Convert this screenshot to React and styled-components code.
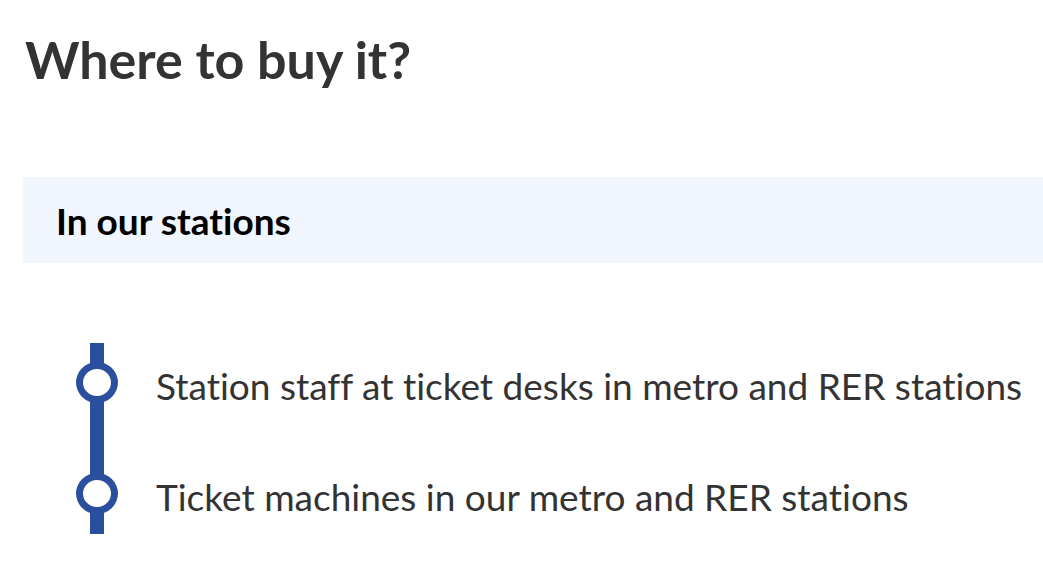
import React from "react";
import styled, { createGlobalStyle } from "styled-components";

const GlobalStyle = createGlobalStyle`
  body {
    margin: 0;
    background: #fff;
    font-family: Lato, "Open Sans", sans-serif;
    font-variant-ligatures: none;
  }
`;

const Page = styled.main`
  padding: 27px 0 0 23px;
`;

const Title = styled.h2`
  margin: 0 0 85px 2px;
  font-size: 52px;
  font-weight: 700;
  line-height: 65px;
  color: #333;
`;

const Panel = styled.section`
  background: #f0f5fe;
  padding: 23px 0 21px 33px;
`;

const PanelTitle = styled.h3`
  margin: 0;
  font-size: 37px;
  font-weight: 700;
  line-height: 42px;
  color: #000;
`;

const Stops = styled.ul`
  position: relative;
  list-style: none;
  margin: 80px 0 0 53px;
  padding: 19px 0 20px;
  display: flex;
  flex-direction: column;
  gap: 70px;

  /* the metro line behind the stops */
  &::before {
    content: "";
    position: absolute;
    top: 0;
    bottom: 0;
    left: 14px;
    width: 14px;
    background: #2b4f9f;
  }
`;

const Stop = styled.li`
  display: flex;
  align-items: flex-start;
  gap: 38px;
  height: 41px;
`;

const Dot = styled.span`
  position: relative;
  box-sizing: border-box;
  flex: none;
  width: 42px;
  height: 41px;
  border: 7px solid #2b4f9f;
  border-radius: 50%;
  background: #fff;
`;

const Label = styled.span`
  margin-top: 3px;
  font-size: 37px;
  line-height: 41px;
  color: #333;
  white-space: nowrap;
`;

const places = [
  "Station staff at ticket desks in metro and RER stations",
  "Ticket machines in our metro and RER stations",
];

export default function App() {
  return (
    <>
      <GlobalStyle />
      <Page>
        <Title>Where to buy it?</Title>
        <Panel>
          <PanelTitle>In our stations</PanelTitle>
        </Panel>
        <Stops>
          {places.map((p) => (
            <Stop key={p}>
              <Dot />
              <Label>{p}</Label>
            </Stop>
          ))}
        </Stops>
      </Page>
    </>
  );
}
